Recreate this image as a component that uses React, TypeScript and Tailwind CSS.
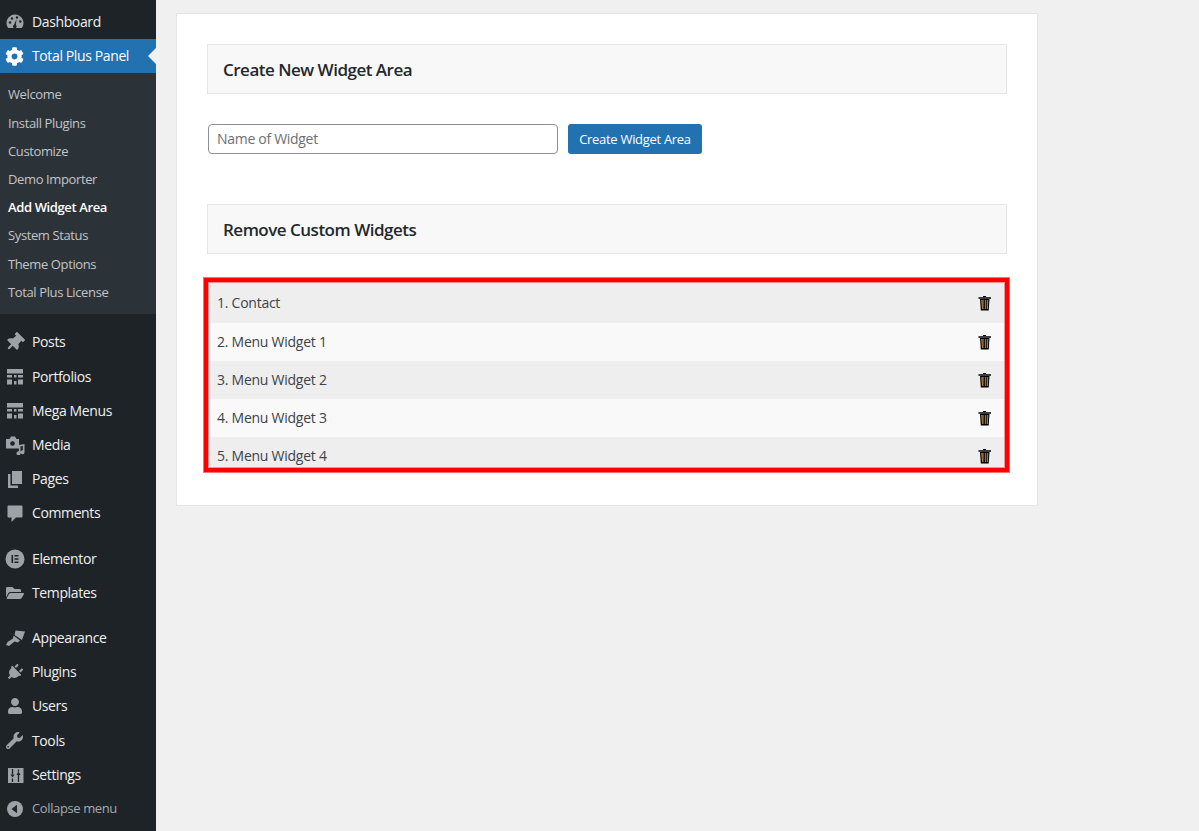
import React from "react";
import { FaCog, FaThumbtack, FaFolderOpen, FaPlug, FaUser, FaWrench } from "react-icons/fa";

const C = "#9ca2a7";
const Gauge = () => (
  <svg width="20" height="20" viewBox="0 0 20 20" fill={C}>
    <path d="M10 2.500a8.500 8.500 0 0 0-8 11.300c.3.800.8 1.700 1.200 2.200h13.600c.4-.5.9-1.400 1.200-2.200A8.500 8.500 0 0 0 10 2.500z" />
    <circle cx="5" cy="10.500" r="1.200" fill="#1d2327" /><circle cx="7" cy="6.500" r="1.200" fill="#1d2327" />
    <circle cx="12" cy="5.500" r="1.200" fill="#1d2327" /><circle cx="15.300" cy="9.500" r="1.200" fill="#1d2327" />
    <path d="M11.500 7l-.6 6a1.800 1.800 0 1 1-1.800-.2z" fill="#1d2327" />
  </svg>
);
const Table = () => (
  <svg width="20" height="20" viewBox="0 0 20 20" fill={C}>
    <path d="M2 2h16v4.500H2zM2 8h5v2.500H2zM9 8h2.500v2.500H9zM13 8h5v2.500h-5zM2 12.500h5v5H2zM9 14h2.500v3.500H9zM13 12.500h5v5h-5z" />
  </svg>
);
const Media = () => (
  <svg width="20" height="20" viewBox="0 0 20 20" fill={C}>
    <path d="M1 4h3.500l1.500-2.500h4L11.500 4h2.500v9.500H1z" />
    <circle cx="7.500" cy="8.500" r="2.300" fill="#1d2327" />
    <path d="M19.500 9.500v8.300a2 2 0 1 1-1.600-2V11.500l-2.400.5v6.800a2 2 0 1 1-1.600-2v-6.300z" transform="translate(0 -.5)" />
  </svg>
);
const Pages = () => (
  <svg width="20" height="20" viewBox="0 0 20 20" fill={C}>
    <path d="M7 2h10v13H7z" />
    <path d="M3 5h2.500v11.500H13V19H3z" />
  </svg>
);
const Comment = () => (
  <svg width="20" height="20" viewBox="0 0 20 20" fill={C}>
    <path d="M3.500 2.500h13a1 1 0 0 1 1 1v10a1 1 0 0 1-1 1h-5.500l-4.500 4.500v-4.500H3.500a1 1 0 0 1-1-1v-10a1 1 0 0 1 1-1z" />
  </svg>
);
const Elementor = () => (
  <svg width="20" height="20" viewBox="0 0 20 20">
    <circle cx="10" cy="10" r="9.500" fill={C} />
    <path d="M6.500 6h1.600v8H6.500zM9.500 6h4v1.600h-4zM9.500 9.200h4v1.600h-4zM9.500 12.400h4V14h-4z" fill="#1d2327" />
  </svg>
);
const Brush = () => (
  <svg width="20" height="20" viewBox="0 0 20 20" fill={C}>
    <path d="M10.500 2.500L20 3.500l-3 8.500-7.500-5z" />
    <path d="M8.500 7.500l6.500 5-2 2-3.500-1L4 18l-3-1 1.500-3 5.500-3.500z" />
  </svg>
);
const Sliders = () => (
  <svg width="20" height="20" viewBox="0 0 20 20">
    <path d="M3 3h15.500v15H3z" fill={C} />
    <path d="M7.500 4v5.500M7.500 13.500V17M13.500 4.500v2M13.500 10v7" stroke="#1d2327" strokeWidth="1.300" />
    <path d="M5.500 9.500l2 3 2-3zM11.500 10l2-3.500 2 3.500z" fill="#1d2327" />
  </svg>
);
const Collapse = () => (
  <svg width="20" height="20" viewBox="0 0 20 20">
    <circle cx="10" cy="10" r="8" fill={C} />
    <path d="M12 5.800v8.400L6.500 10z" fill="#1d2327" />
  </svg>
);
const Trash = () => (
  <svg width="14" height="15" viewBox="0 0 14 15" className="block">
    <path d="M5 0h3v1H5zM0.500 1.200h12.500v1.600H0.500z" fill="#000" />
    <path d="M2 3h9.500l-.8 11.500H2.800z" fill="#000" />
    <path d="M3.300 4h1.300l.2 9H4z" fill="#f0921e" />
    <path d="M5.300 4h.9v9h-.7z" fill="#2a8fe8" />
    <path d="M7.300 4h.9v9h-.9z" fill="#e8a21e" />
    <path d="M9.200 4h1.100l-.4 9h-.9z" fill="#39a0f0" />
  </svg>
);

type Item = { label: string; icon: React.ReactNode; mt?: string };
const top1: Item[] = [
  { label: "Posts", icon: <FaThumbtack size={19} className="rotate-45" color={C} /> },
  { label: "Portfolios", icon: <Table /> },
  { label: "Mega Menus", icon: <Table /> },
  { label: "Media", icon: <Media /> },
  { label: "Pages", icon: <Pages /> },
  { label: "Comments", icon: <Comment /> },
  { label: "Elementor", icon: <Elementor />, mt: "mt-[11px]" },
  { label: "Templates", icon: <FaFolderOpen size={18} color={C} /> },
  { label: "Appearance", icon: <Brush />, mt: "mt-[11px]" },
  { label: "Plugins", icon: <FaPlug size={17} color={C} className="rotate-45" /> },
  { label: "Users", icon: <FaUser size={16} color={C} /> },
  { label: "Tools", icon: <FaWrench size={17} color={C} /> },
  { label: "Settings", icon: <Sliders /> },
];
const subs = ["Welcome", "Install Plugins", "Customize", "Demo Importer", "Add Widget Area", "System Status", "Theme Options", "Total Plus License"];
const rows = ["1. Contact", "2. Menu Widget 1", "3. Menu Widget 2", "4. Menu Widget 3", "5. Menu Widget 4"];

const Row = ({ icon, label, cls = "text-[#f0f0f1]" }: { icon: React.ReactNode; label: string; cls?: string }) => (
  <div className={`flex h-[34.2px] items-center ${cls}`}>
    <span className="flex w-[28px] justify-center pl-[1px]">{icon}</span>
    <span className="ml-[4px] pb-[1px]">{label}</span>
  </div>
);

const Heading = ({ children }: { children: React.ReactNode }) => (
  <div className="flex h-[50px] items-center border border-[#e5e5e5] bg-[#f8f8f8] pl-[15px] pt-[2px] text-[17px] font-semibold tracking-[-0.5px] text-[#23282d]">
    {children}
  </div>
);

export default function App() {
  return (
    <div className="flex h-[831px] w-[1199px] overflow-hidden bg-[#f0f0f1] font-['Open_Sans',sans-serif] text-[14px] tracking-[-0.38px]">
      <aside className="flex w-[156px] shrink-0 flex-col bg-[#1d2327] pt-[5px]">
        <Row icon={<Gauge />} label="Dashboard" />
        <div className="relative">
          <Row icon={<FaCog size={19} color="#fff" />} label="Total Plus Panel" cls="bg-[#2271b1] text-white" />
          <span className="absolute right-0 top-[9px] h-0 w-0 border-y-[8px] border-r-[8px] border-y-transparent border-r-[#f0f0f1]" />
        </div>
        <div className="flex h-[241px] flex-col bg-[#2c3338] pt-[7.7px] text-[13px] text-[#c3c4c7]">
          {subs.map((s) => (
            <div key={s} className={`flex h-[28.2px] items-center pl-[8px] ${s === "Add Widget Area" ? "font-semibold text-white" : ""}`}>
              {s}
            </div>
          ))}
        </div>
        <div className="pt-[11px]">
          {top1.map((i) => (
            <div key={i.label} className={i.mt ?? ""}>
              <Row icon={i.icon} label={i.label} />
            </div>
          ))}
          <Row icon={<Collapse />} label="Collapse menu" cls="text-[13px] text-[#a7aaad]" />
        </div>
      </aside>
      <main className="flex-1 pl-[20px] pt-[13px]">
        <div className="h-[493px] w-[862px] border border-[#e5e5e5] bg-white px-[30px] pt-[30px]">
          <Heading>Create New Widget Area</Heading>
          <div className="mt-[30px] flex h-[30px] items-center gap-[10px] pl-[1px]">
            <div className="flex h-[30px] w-[350px] items-center rounded-[4px] border border-[#8c8f94] pb-[2px] pl-[8px] tracking-[-0.3px] text-[#6b6f75]">
              Name of Widget
            </div>
            <div className="flex h-[30px] w-[134px] items-center justify-center rounded-[3px] bg-[#2271b1] pt-[1px] text-[13px] tracking-[-0.3px] text-white">
              Create Widget Area
            </div>
          </div>
          <div className="mt-[50px]">
            <Heading>Remove Custom Widgets</Heading>
          </div>
          <div className="mt-[23px] -ml-[4px] h-[196px] w-[807px] border border-[#ff7070]">
            <div className="h-full border-[4px] border-[#ff0000]">
              <div className="h-full overflow-hidden border border-[#ff9090] text-[#3c434a]">
                {rows.map((r, idx) => (
                  <div key={r} className={`flex items-center justify-between pl-[8px] pr-[12px] ${idx === 0 ? "h-[40px]" : "h-[38px]"} ${idx % 2 ? "bg-[#f9f9f9]" : "bg-[#eeeeee]"}`}>
                    <span className="pb-[1px] tracking-[-0.25px]">{r}</span>
                    <Trash />
                  </div>
                ))}
              </div>
            </div>
          </div>
        </div>
      </main>
    </div>
  );
}
